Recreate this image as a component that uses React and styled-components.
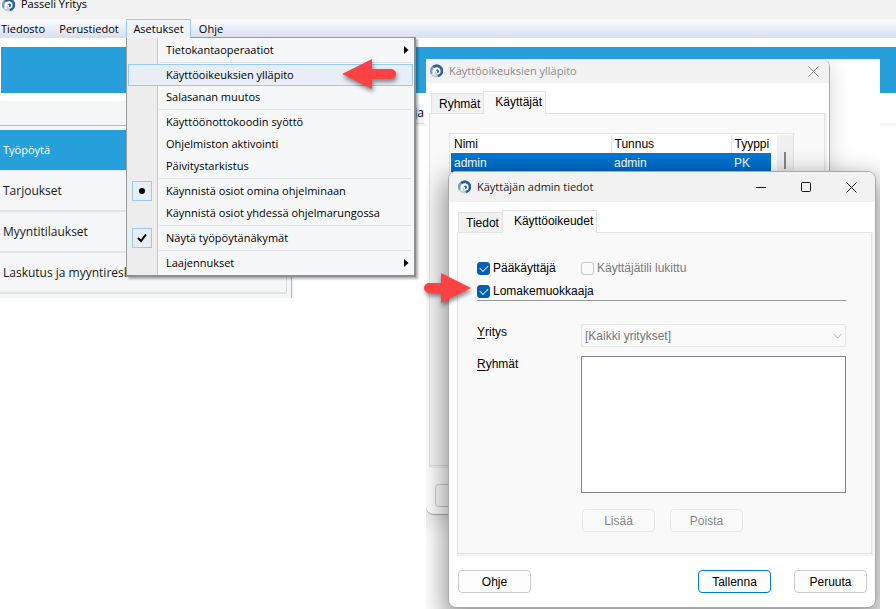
import React from 'react';
import styled, { createGlobalStyle, css } from 'styled-components';

const GlobalStyle = createGlobalStyle`
  * {
    box-sizing: border-box;
  }
  body {
    margin: 0;
    background: #fff;
    color: #000;
    font-family: "Open Sans", "Noto Sans", sans-serif;
    font-size: 11px;
    line-height: 16px;
    overflow: hidden;
  }
  button, input, select {
    font: inherit;
    color: inherit;
    margin: 0;
  }
`;

const formFont = css`
  font-family: "Liberation Sans", Arial, sans-serif;
  font-size: 12px;
  line-height: 16px;
`;

const Desktop = styled.div`
  position: relative;
  min-height: 100vh;
  overflow: hidden;
`;

/* main window */

const AppTitle = styled.header`
  display: flex;
  align-items: flex-end;
  gap: 6px;
  height: 19px;
  padding: 0 0 7px 2px;
  background: #f2f2f2;
`;

const MenuBar = styled.nav`
  display: grid;
  grid-template-columns: 52px 74px 65px 40px;
  height: 19px;
  background: linear-gradient(#fdfdff, #d8def0);
`;

const MenuSlot = styled.div`
  position: relative;
`;

const MenuButton = styled.button`
  position: relative;
  z-index: ${props => (props.$open ? 3 : 'auto')};
  width: 100%;
  height: 19px;
  padding: 0;
  border: 1px solid ${props => (props.$open ? '#99c9f7' : 'transparent')};
  border-bottom: 0;
  background: ${props => (props.$open ? '#f0f4fa' : 'none')};
  text-align: ${props => (props.$first ? 'left' : 'center')};
  line-height: 16px;
  white-space: nowrap;
`;

const Banner = styled.div`
  height: 46px;
  margin: 9px 0 8px 1px;
  background: #269fdb;
`;

const Workspace = styled.div`
  display: grid;
  grid-template-columns: 294px 1fr;
`;

const Sidebar = styled.aside`
  display: flex;
  padding-right: 2px;
  background: #f4f6f8;
`;

const SideMain = styled.div`
  flex: 1;
  padding-bottom: 4px;
  border-right: 1px solid #b8b8b8;
`;

const SideHead = styled.div`
  height: 25px;
  margin-bottom: 4px;
  border-bottom: 1px solid #b8b8b8;
`;

const SideLink = styled.a`
  display: flex;
  align-items: center;
  height: 41px;
  margin-right: 4px;
  padding-left: 3px;
  border-right: 1px solid #d9dbdd;
  border-bottom: ${props => (props.$active ? 1 : 2)}px solid #e1e3e5;
  background: ${props => (props.$active ? '#269fdb' : 'none')};
  color: ${props => (props.$active ? '#fff' : '#1a1a1a')};
  font-size: ${props => (props.$active ? '11px' : '12px')};
  text-decoration: none;
  white-space: nowrap;
`;

const MainTabs = styled.div`
  height: 22px;
  margin-top: 3px;
  border-bottom: 3px solid #f4f4f4;
`;

const MainTab = styled.div`
  width: 130px;
  height: 20px;
  border-bottom: 1px solid #ddd;
  background: #f3f3f3;
  font-size: 12px;
  text-align: right;
  line-height: 18px;
`;

/* drop-down menu */

const Popup = styled.div`
  position: absolute;
  z-index: 2;
  top: 18px;
  left: 0;
  width: 290px;
  padding: 1px;
  border: 1px solid #97999c;
  border-right: 2px solid #8d8f92;
  border-bottom: 2px solid #8d8f92;
  background: linear-gradient(to right, #ededed 30px, #c8c8c8 30px, #c8c8c8 31px, #f5f7f9 31px);
  box-shadow: 2px 2px 2px rgba(0, 0, 0, 0.3);
`;

const PopupItem = styled.button`
  display: grid;
  grid-template-columns: 37px 1fr 8px;
  align-items: center;
  width: 100%;
  height: 22px;
  padding: 0;
  border: 1px solid ${props => (props.$hot ? '#99c9f7' : 'transparent')};
  background: ${props => (props.$hot ? '#e8eef6' : 'none')};
  text-align: left;
  white-space: nowrap;
`;

const Mark = styled.span`
  display: grid;
  place-items: center;
  width: 20px;
  height: 20px;
  margin-left: 3px;
  border: 1px solid #99c9f7;
  background: #e8eef6;
`;

const Divider = styled.div`
  height: 1px;
  margin: 1px 2px 1px 31px;
  background: #dfe1e4;
`;

/* dialogs */

const Stage = styled.section`
  position: absolute;
  top: 59px;
  right: 16px;
  bottom: 0;
  left: 426px;
  overflow: hidden;
  background: #fff;
`;

const Dialog = styled.div`
  ${formFont}
  position: absolute;
  top: ${props => props.$top}px;
  left: ${props => props.$left}px;
  width: ${props => props.$width}px;
  border: 1px solid #a9a9a9;
  border-width: ${props => (props.$front ? '1px' : '0 1px 1px 0')};
  border-radius: 8px;
  overflow: hidden;
  background: #fff;
  box-shadow: ${props =>
    props.$front
      ? '0 10px 26px 4px rgba(0, 0, 0, 0.42)'
      : '0 4px 22px rgba(0, 0, 0, 0.16)'};
`;

const DialogTitle = styled.div`
  display: flex;
  align-items: center;
  height: ${props => (props.$front ? 30 : 24)}px;
  padding: ${props => (props.$front ? '0 18px 0 9px' : '0 10px 0 4px')};
  background: #f2f2f2;
  color: ${props => (props.$front ? '#1a1a1a' : '#8c8c8c')};
  font-family: "Open Sans", "Noto Sans", sans-serif;
  font-size: 11px;
`;

const DialogName = styled.span`
  flex: 1;
  margin-left: 6px;
`;

const WindowButton = styled.button`
  display: flex;
  margin-left: ${props => (props.$spaced ? 34 : 0)}px;
  padding: 0;
  border: 0;
  background: none;
`;

const TabRow = styled.div`
  display: flex;
  align-items: flex-end;
  height: 30px;
  padding-left: ${props => (props.$front ? 9 : 5)}px;
`;

const Tab = styled.button`
  position: relative;
  height: ${props => (props.$active ? 23 : 20)}px;
  margin-bottom: ${props => (props.$active ? -1 : 0)}px;
  padding: ${props => (props.$active ? '0 3px 2px 11px' : '0 3px 0 7px')};
  border: 1px solid #e3e3e3;
  border-bottom: 0;
  border-right-width: ${props => (props.$active ? 1 : 0)}px;
  background: ${props => (props.$active ? '#f9f9f9' : '#f2f2f2')};
`;

const Panel = styled.div`
  margin: ${props => (props.$front ? '0 3px 0 8px' : '0 4px 0 3px')};
  padding: ${props => (props.$front ? '27px 25px 21px 19px' : '19px 30px 0 19px')};
  height: ${props => (props.$front ? 'auto' : '353px')};
  border: 1px solid #e3e3e3;
  box-shadow: 1px 1px 0 1px #f3f3f3;
  background: #f9f9f9;
`;

const UserList = styled.div`
  display: flex;
  justify-content: space-between;
  height: 240px;
  border: 1px solid #e3e3e3;
  padding: 1px 0 0 1px;
  background: #fff;
`;

const UserTable = styled.table`
  width: 320px;
  height: 37px;
  border-collapse: collapse;
  table-layout: fixed;

  th, td {
    height: 18px;
    padding: 0 0 0 3px;
    font-weight: 400;
    text-align: left;
  }
  th + th {
    border-left: 1px solid #e3e3e3;
  }
  td {
    background: linear-gradient(#0078d7, #006bc4);
    color: #fff;
  }
`;

const ScrollTrack = styled.div`
  width: 16px;
  padding: 17px 0 0 7px;
  background: #f0f0f0;

  &::before {
    content: "";
    display: block;
    width: 2px;
    height: 17px;
    background: #858585;
  }
`;

const Checks = styled.div`
  display: grid;
  grid-template-columns: 104px 1fr;
  row-gap: 7px;
  padding-bottom: 1px;
  border-bottom: 1px solid #999;
`;

const CheckLabel = styled.label`
  display: flex;
  align-items: center;
  gap: 3px;
  white-space: nowrap;
  color: ${props => (props.$muted ? '#7a7a7a' : '#000')};
`;

const CheckInput = styled.input`
  appearance: none;
  display: grid;
  flex: none;
  place-items: center;
  width: 13px;
  height: 13px;
  border: 1px solid #c4c4c4;
  border-radius: 3px;
  background: #fbfbfb;

  &:checked {
    border-color: #005fb8;
    background: #005fb8;
  }
  &:checked::before {
    content: "";
    width: 7px;
    height: 4px;
    margin-bottom: 2px;
    border: solid #d5e6f6;
    border-width: 0 0 1px 1px;
    transform: rotate(-45deg);
  }
`;

const Fields = styled.div`
  display: grid;
  grid-template-columns: 104px 1fr;
  row-gap: 9px;
  margin-top: 23px;
`;

const FieldLabel = styled.label`
  u {
    text-underline-offset: 2px;
  }
`;

const SelectWrap = styled.div`
  display: grid;
  align-items: center;

  select, svg {
    grid-area: 1 / 1;
  }
  svg {
    justify-self: end;
    margin-right: 4px;
    pointer-events: none;
  }
`;

const CompanySelect = styled.select`
  appearance: none;
  width: 100%;
  height: 23px;
  padding: 0 3px;
  border: 1px solid #e6e6e6;
  border-radius: 2px;
  background: #fafafa;
  color: #767676;
  opacity: 1;
`;

const GroupList = styled.select`
  width: 100%;
  height: 137px;
  padding: 0;
  border: 1px solid #82828c;
  border-radius: 0;
  background: #fff;
  outline: 0;
`;

const ListButtons = styled.div`
  display: flex;
  gap: 15px;
  margin: 16px 0 0 105px;
`;

const Footer = styled.div`
  display: flex;
  gap: 23px;
  padding: ${props => (props.$front ? '16px 8px 14px 9px' : '18px 9px 7px')};
`;

const PushButton = styled.button`
  width: 73px;
  height: 23px;
  margin-right: ${props => (props.$push ? 'auto' : 0)};
  padding: 0;
  border: 1px solid ${props => (props.$primary ? '#0078d4' : '#cdcdcd')};
  border-radius: 4px;
  background: #fdfdfd;

  &:disabled {
    border-color: #e8e8e8;
    background: #fafafa;
    color: #858585;
  }
`;

/* red pointers drawn over the windows */

const Pointer = styled.svg`
  position: absolute;
  z-index: 4;
  top: ${props => props.$top}px;
  left: ${props => props.$left}px;
  overflow: visible;
  filter: drop-shadow(1px 3px 2px rgba(0, 0, 0, 0.45));
`;

const Arrow = ({ top, left, right }) => (
  <Pointer $top={top} $left={left} width="54" height="30" viewBox="0 0 54 30" aria-hidden="true">
    <path
      fill="#fc4242"
      transform={right ? 'translate(47 0) scale(-1 1)' : undefined}
      d={
        right
          ? 'M0 15 30 0V10H42a5 5 0 0 1 0 10H30V30Z'
          : 'M0 15 30 0V10H49a5 5 0 0 1 0 10H30V30Z'
      }
    />
  </Pointer>
);

const Logo = () => (
  <svg width="13" height="14" viewBox="0 0 13 14" aria-hidden="true">
    <circle cx="6.500" cy="7" r="6.500" fill="#c5ced8" />
    <path fill="#7d9dc0" d="M6.500 .5A6.500 6.500 0 0 0 1 10.500L4 8V4L8 3Z" />
    <path fill="#2a5f9c" d="M2.500 2A6.500 6.500 0 1 1 8 13.300L7.500 11 9.500 6 7.500 4H4Z" />
    <path fill="#fff" d="M3.200 10.800C1.300 7 3 3.300 6.500 3.300C9.500 3.300 11 5.500 10.600 8C10 10.500 7.800 11 6.500 10.200L7.600 9.300C6 9 5.300 7.800 6 6.500C4.300 7.300 4 9.500 5 11.300Z" />
    <path fill="#2a5f9c" d="M5.700 6.300C7 5 9 5.700 9 7.200C9 8.500 8 9.200 7 9C7.600 8.300 7.200 6.700 5.700 6.300Z" />
  </svg>
);

const CloseIcon = () => (
  <svg width="11" height="11" viewBox="0 0 11 11" fill="none" stroke="currentColor" aria-hidden="true">
    <path d="M.5.5l10 10M10.500.5l-10 10" />
  </svg>
);

const menuItems = [
  { text: 'Tietokantaoperaatiot', sub: true },
  null,
  { text: 'Käyttöoikeuksien ylläpito', hot: true },
  { text: 'Salasanan muutos' },
  null,
  { text: 'Käyttöönottokoodin syöttö' },
  { text: 'Ohjelmiston aktivointi' },
  { text: 'Päivitystarkistus' },
  null,
  { text: 'Käynnistä osiot omina ohjelminaan', mark: 'dot' },
  { text: 'Käynnistä osiot yhdessä ohjelmarungossa' },
  null,
  { text: 'Näytä työpöytänäkymät', mark: 'check' },
  null,
  { text: 'Laajennukset', sub: true },
];

const SettingsMenu = () => (
  <Popup role="menu">
    {menuItems.map((item, i) =>
      item === null ? (
        <Divider key={i} />
      ) : (
        <PopupItem key={i} role="menuitem" $hot={item.hot}>
          {item.mark ? (
            <Mark>
              <svg width="10" height="10" viewBox="0 0 10 10" aria-hidden="true">
                {item.mark === 'dot' ? (
                  <circle cx="5" cy="5" r="3" />
                ) : (
                  <path d="M1 5l3 3 5-6.500" fill="none" stroke="#000" strokeWidth="2" />
                )}
              </svg>
            </Mark>
          ) : (
            <span />
          )}
          {item.text}
          {item.sub && (
            <svg width="5" height="8" viewBox="0 0 5 8" aria-hidden="true">
              <path d="M0 0l4.500 4L0 8z" />
            </svg>
          )}
        </PopupItem>
      )
    )}
  </Popup>
);

const UsersDialog = () => (
  <Dialog $top={0} $left={0} $width={404}>
    <DialogTitle>
      <Logo />
      <DialogName>Käyttöoikeuksien ylläpito</DialogName>
      <WindowButton aria-label="Sulje">
        <CloseIcon />
      </WindowButton>
    </DialogTitle>
    <TabRow>
      <Tab>Ryhmät</Tab>
      <Tab $active>Käyttäjät</Tab>
    </TabRow>
    <Panel>
      <UserList>
        <UserTable>
          <colgroup>
            <col width="160" />
            <col width="120" />
            <col width="40" />
          </colgroup>
          <thead>
            <tr>
              <th>Nimi</th>
              <th>Tunnus</th>
              <th>Tyyppi</th>
            </tr>
          </thead>
          <tbody>
            <tr>
              <td>admin</td>
              <td>admin</td>
              <td>PK</td>
            </tr>
          </tbody>
        </UserTable>
        <ScrollTrack />
      </UserList>
    </Panel>
    <Footer>
      <PushButton aria-label="Ohje" />
    </Footer>
  </Dialog>
);

const AdminDialog = () => (
  <Dialog $front $top={112} $left={22} $width={428}>
    <DialogTitle $front>
      <Logo />
      <DialogName>Käyttäjän admin tiedot</DialogName>
      <WindowButton aria-label="Pienennä">
        <svg width="11" height="11" viewBox="0 0 11 11" stroke="currentColor" aria-hidden="true">
          <path d="M0 5.500h10" />
        </svg>
      </WindowButton>
      <WindowButton $spaced aria-label="Suurenna">
        <svg width="11" height="11" viewBox="0 0 11 11" fill="none" stroke="currentColor" aria-hidden="true">
          <rect x=".5" y=".5" width="9" height="9" rx="1" />
        </svg>
      </WindowButton>
      <WindowButton $spaced aria-label="Sulje">
        <CloseIcon />
      </WindowButton>
    </DialogTitle>
    <TabRow $front>
      <Tab>Tiedot</Tab>
      <Tab $active>Käyttöoikeudet</Tab>
    </TabRow>
    <Panel $front>
      <Checks>
        <CheckLabel>
          <CheckInput type="checkbox" defaultChecked />
          Pääkäyttäjä
        </CheckLabel>
        <CheckLabel $muted>
          <CheckInput type="checkbox" disabled />
          Käyttäjätili lukittu
        </CheckLabel>
        <CheckLabel>
          <CheckInput type="checkbox" defaultChecked />
          Lomakemuokkaaja
        </CheckLabel>
      </Checks>
      <Fields>
        <FieldLabel htmlFor="company">
          <u>Y</u>ritys
        </FieldLabel>
        <SelectWrap>
          <CompanySelect id="company" disabled>
            <option>[Kaikki yritykset]</option>
          </CompanySelect>
          <svg width="9" height="6" viewBox="0 0 9 6" fill="none" stroke="#b0b0b0" aria-hidden="true">
            <path d="M.5 1l4 4 4-4" />
          </svg>
        </SelectWrap>
        <FieldLabel htmlFor="groups">
          <u>R</u>yhmät
        </FieldLabel>
        <GroupList id="groups" size="8" />
      </Fields>
      <ListButtons>
        <PushButton disabled>Lisää</PushButton>
        <PushButton disabled>Poista</PushButton>
      </ListButtons>
    </Panel>
    <Footer $front>
      <PushButton $push>Ohje</PushButton>
      <PushButton $primary>Tallenna</PushButton>
      <PushButton>Peruuta</PushButton>
    </Footer>
  </Dialog>
);

const App = () => (
  <Desktop>
    <GlobalStyle />
    <AppTitle>
      <Logo />
      Passeli Yritys
    </AppTitle>
    <MenuBar>
      <MenuSlot>
        <MenuButton $first>Tiedosto</MenuButton>
      </MenuSlot>
      <MenuSlot>
        <MenuButton>Perustiedot</MenuButton>
      </MenuSlot>
      <MenuSlot>
        <MenuButton $open>Asetukset</MenuButton>
        <SettingsMenu />
      </MenuSlot>
      <MenuSlot>
        <MenuButton>Ohje</MenuButton>
      </MenuSlot>
    </MenuBar>
    <Banner />
    <Workspace>
      <Sidebar>
        <SideMain>
          <SideHead />
          <SideLink href="#" $active>Työpöytä</SideLink>
          <SideLink href="#">Tarjoukset</SideLink>
          <SideLink href="#">Myyntitilaukset</SideLink>
          <SideLink href="#">Laskutus ja myyntireskontra</SideLink>
        </SideMain>
      </Sidebar>
      <MainTabs>
        <MainTab>ja</MainTab>
      </MainTabs>
    </Workspace>
    <Stage>
      <UsersDialog />
      <AdminDialog />
    </Stage>
    <Arrow top={59} left={342} />
    <Arrow top={273} left={424} right />
  </Desktop>
);

export default App;
